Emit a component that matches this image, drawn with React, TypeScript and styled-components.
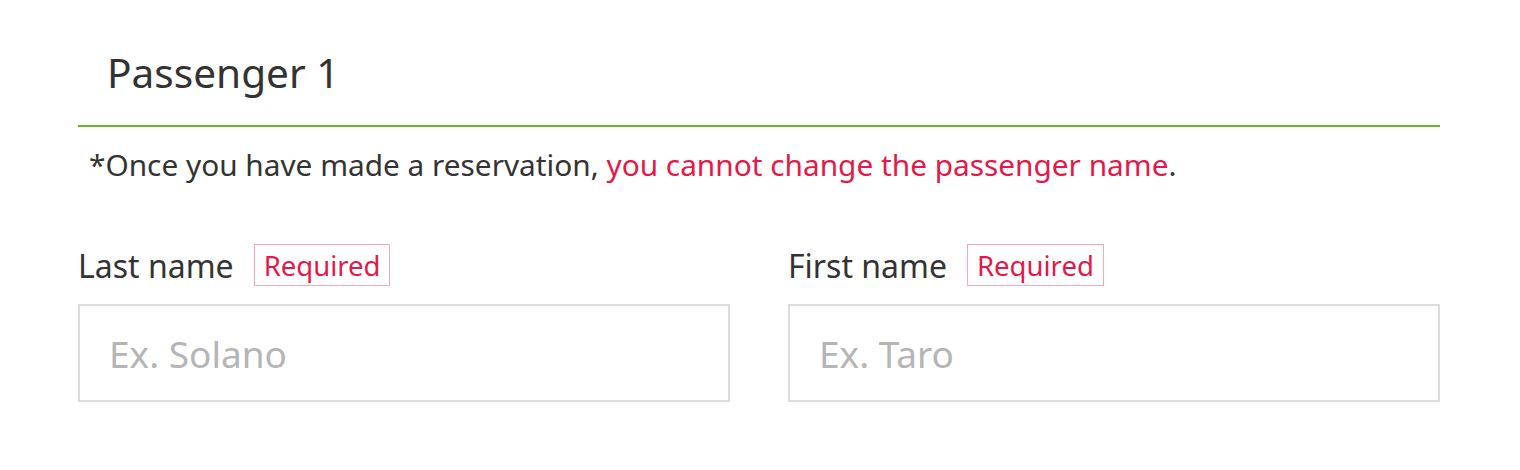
import React from "react";
import styled, { createGlobalStyle } from "styled-components";

const GlobalStyle = createGlobalStyle`
  html, body {
    margin: 0;
    padding: 0;
    background: #fff;
  }
  body {
    font-family: "Noto Sans", "Liberation Sans", sans-serif;
    color: #333;
  }
`;

const SPage = styled.div`
  width: 1520px;
  height: 470px;
  padding: 41px 80px 0 78px;
  box-sizing: border-box;
`;

const SHeader = styled.h2`
  margin: 0;
  padding: 0 0 20px 29px;
  font-size: 40.6px;
  font-weight: 400;
  line-height: 64px;
  color: #333;
  border-bottom: 2px solid #6db52c;
`;

const SNote = styled.p`
  margin: 0;
  padding: 17px 0 0 11px;
  font-size: 29.8px;
  line-height: 42px;
  color: #333;
`;

const SAlert = styled.span`
  color: #e5184b;
`;

const SFields = styled.div`
  display: grid;
  grid-template-columns: 1fr 1fr;
  column-gap: 58px;
  margin-top: 58px;
`;

const SField = styled.div`
  display: flex;
  flex-direction: column;
  gap: 18px;
`;

const SLabelRow = styled.div`
  display: flex;
  align-items: center;
  gap: 20px;
  height: 42px;
`;

const SLabel = styled.label`
  font-size: 32px;
  color: #333;
`;

const SBadge = styled.span`
  display: inline-flex;
  align-items: center;
  height: 42px;
  padding: 0 9px;
  box-sizing: border-box;
  border: 1px solid #f3a9ba;
  color: #e5184b;
  font-size: 27.5px;
`;

const SInput = styled.input`
  height: 98px;
  box-sizing: border-box;
  border: 2px solid #dcdcdc;
  padding: 0 29px;
  font-family: "Noto Sans", "Liberation Sans", sans-serif;
  font-size: 37px;
  color: #333;
  outline: none;
  &::placeholder {
    color: #b5b5b5;
  }
`;

const fields = [
  { id: "last", label: "Last name", placeholder: "Ex. Solano" },
  { id: "first", label: "First name", placeholder: "Ex. Taro" },
];

export default function App() {
  return (
    <>
      <GlobalStyle />
      <SPage>
        <SHeader>Passenger 1</SHeader>
        <SNote>
          *Once you have made a reservation,{" "}
          <SAlert>you cannot change the passenger name</SAlert>.
        </SNote>
        <SFields>
          {fields.map((f) => (
            <SField key={f.id}>
              <SLabelRow>
                <SLabel htmlFor={f.id}>{f.label}</SLabel>
                <SBadge>Required</SBadge>
              </SLabelRow>
              <SInput id={f.id} placeholder={f.placeholder} />
            </SField>
          ))}
        </SFields>
      </SPage>
    </>
  );
}
